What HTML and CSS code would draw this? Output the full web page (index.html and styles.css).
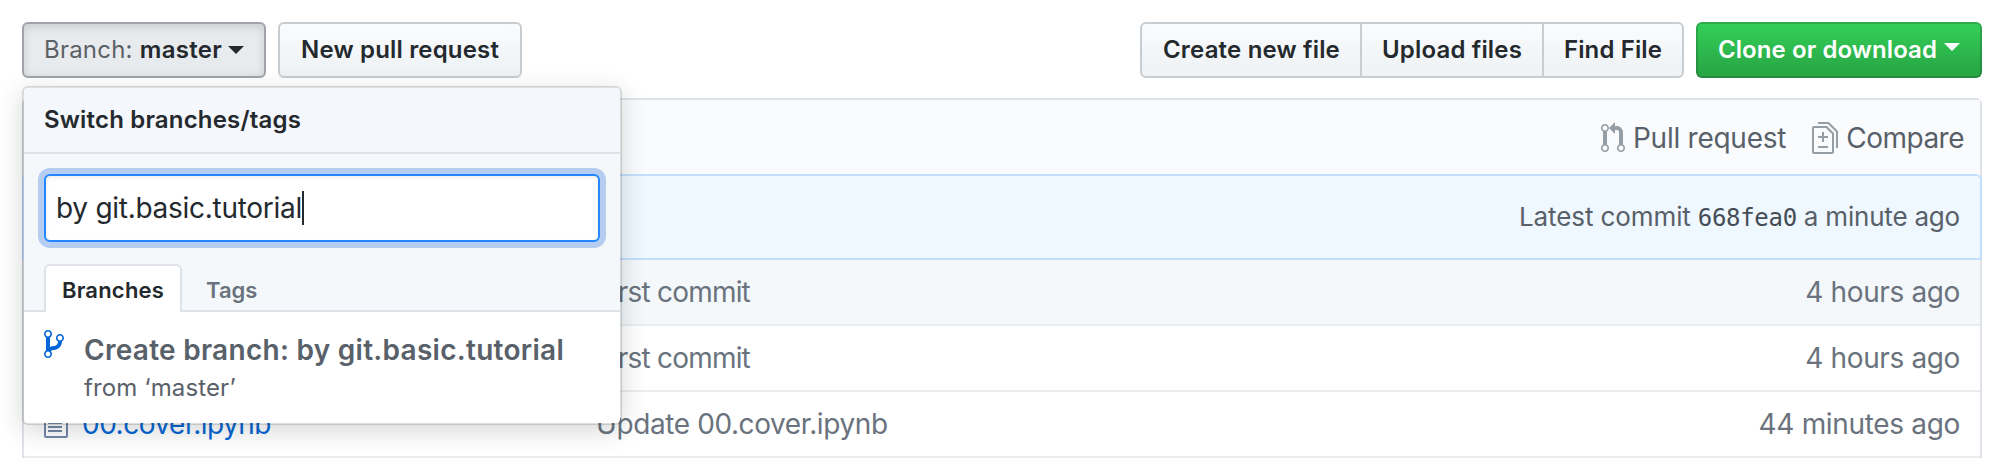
FILE: index.html
```html
<!DOCTYPE html>
<html lang="en">
<head>
<meta charset="utf-8">
<title>Repository files</title>
<link rel="stylesheet" href="styles.css">
</head>
<body>
<div class="toolbar">
  <div class="toolbar-left">
    <div class="branch-select">
      <button class="btn btn-selected"><span class="t-branch">Branch:</span><span class="t-master">master</span><span class="caret caret-branch"></span></button>
      <div class="menu">
        <div class="menu-header"><span class="t-switch">Switch branches/tags</span></div>
        <div class="menu-filters">
          <div class="filter-input"><span class="t-input">by git.basic.tutorial</span><span class="text-cursor"></span></div>
          <div class="tabs">
            <div class="tab tab-active"><span class="t-branches">Branches</span></div>
            <div class="tab tab-tags"><span class="t-tags">Tags</span></div>
          </div>
        </div>
        <div class="menu-item">
          <svg class="icon-branch" width="20" height="32" viewBox="0 0 10 16"><path fill-rule="evenodd" d="M10 5c0-1.11-.89-2-2-2a1.993 1.993 0 0 0-1 3.72v.3c-.02.52-.23.98-.63 1.38-.4.4-.86.61-1.38.63-.83.02-1.48.16-2 .45V4.72a1.993 1.993 0 0 0-1-3.72C.88 1 0 1.89 0 3a2 2 0 0 0 1 1.72v6.56c-.59.35-1 .99-1 1.72 0 1.11.89 2 2 2 1.11 0 2-.89 2-2 0-.53-.2-1-.53-1.36.09-.06.48-.41.59-.47.25-.11.56-.17.94-.17 1.05-.05 1.95-.45 2.75-1.25S8.95 7.77 9 6.73h-.02C9.59 6.37 10 5.73 10 5zM2 1.8c.66 0 1.2.55 1.2 1.2 0 .65-.55 1.2-1.2 1.2C1.35 4.2.8 3.65.8 3c0-.65.55-1.2 1.2-1.2zm0 12.41c-.66 0-1.2-.55-1.2-1.2 0-.65.55-1.2 1.2-1.2.65 0 1.2.55 1.2 1.2 0 .65-.55 1.2-1.2 1.2zm6-8c-.66 0-1.2-.55-1.2-1.2 0-.65.55-1.2 1.2-1.2.65 0 1.2.55 1.2 1.2 0 .65-.55 1.2-1.2 1.2z"/></svg>
          <div class="menu-item-text">
            <div class="menu-item-title"><span class="t-create">Create branch: by git.basic.tutorial</span></div>
            <div class="menu-item-sub"><span class="t-from">from ‘master’</span></div>
          </div>
        </div>
      </div>
    </div>
    <button class="btn"><span class="t-newpr">New pull request</span></button>
  </div>
  <div class="toolbar-right">
    <div class="btn-group">
      <button class="btn"><span class="t-newfile">Create new file</span></button>
      <button class="btn"><span class="t-upload">Upload files</span></button>
      <button class="btn"><span class="t-find">Find File</span></button>
    </div>
    <button class="btn btn-primary"><span class="t-clone">Clone or download</span><span class="caret caret-clone"></span></button>
  </div>
</div>
<div class="files">
  <div class="compare-bar">
    <a class="compare-link"><svg width="24" height="32" viewBox="0 0 12 16"><path fill-rule="evenodd" d="M11 11.28V5c-.03-.78-.34-1.47-.94-2.06C9.46 2.35 8.78 2.03 8 2H7V0L4 3l3 3V4h1c.27.02.48.11.69.31.21.2.3.42.31.69v6.28A1.993 1.993 0 0 0 10 15a1.993 1.993 0 0 0 1-3.72zm-1 2.92c-.66 0-1.2-.55-1.2-1.2 0-.65.55-1.2 1.2-1.2.65 0 1.2.55 1.2 1.2 0 .65-.55 1.2-1.2 1.2zM4 3c0-1.11-.89-2-2-2a1.993 1.993 0 0 0-1 3.72v6.56A1.993 1.993 0 0 0 2 15a1.993 1.993 0 0 0 1-3.72V4.72c.59-.34 1-.98 1-1.72zm-.8 10c0 .66-.55 1.2-1.2 1.2-.65 0-1.2-.55-1.2-1.2 0-.65.55-1.2 1.2-1.2.65 0 1.2.55 1.2 1.2zM2 4.2C1.34 4.2.8 3.65.8 3c0-.65.55-1.2 1.2-1.2.65 0 1.2.55 1.2 1.2 0 .65-.55 1.2-1.2 1.2z"/></svg><span class="t-pull">Pull request</span></a>
    <a class="compare-link"><svg width="26" height="32" viewBox="0 0 13 16"><path fill-rule="evenodd" d="M6 7h2v1H6v2H5V8H3V7h2V5h1v2zm-3 6h5v-1H3v1zM7.5 2L11 5.5V15c0 .55-.45 1-1 1H1c-.55 0-1-.45-1-1V3c0-.55.45-1 1-1h6.5zM10 6L7 3H1v12h9V6zM8.5 0H3v1h5l4 4v8h1V4.5L8.5 0z"/></svg><span class="t-compare">Compare</span></a>
  </div>
  <div class="commit-bar"><span class="t-latest">Latest commit</span><span class="sha">668fea0</span><span class="t-minute">a minute ago</span></div>
  <div class="row row-hover"><span class="name"></span><span class="message"><span class="t-first">First commit</span></span><span class="t-hours">4 hours ago</span></div>
  <div class="row"><span class="name"></span><span class="message"><span class="t-first">First commit</span></span><span class="t-hours">4 hours ago</span></div>
  <div class="row"><span class="name"><svg width="24" height="32" viewBox="0 0 12 16"><path fill-rule="evenodd" d="M6 5H2V4h4v1zM2 8h7V7H2v1zm0 2h7V9H2v1zm0 2h7v-1H2v1zm10-7.5V14c0 .55-.45 1-1 1H1c-.55 0-1-.45-1-1V2c0-.55.45-1 1-1h7.5L12 4.5zM11 5L8 2H1v12h10V5z"/></svg><a class="t-file">00.cover.ipynb</a></span><span class="message"><span class="t-update">Update 00.cover.ipynb</span></span><span class="t-minutes">44 minutes ago</span></div>
</div>
</body>
</html>
```
FILE: styles.css
```css
* { box-sizing: border-box; }
body { margin: 0; height: 458px; overflow: hidden; background: #fff; color: #24292e; font-family: Inter, "Noto Sans", sans-serif; font-size: 28px; white-space: nowrap; }
svg { display: block; flex: none; fill: currentColor; }
.toolbar { display: flex; justify-content: space-between; padding: 22px 20px 20px 22px; }
.toolbar-left, .toolbar-right { display: flex; gap: 12px; }
.btn { display: flex; align-items: center; height: 56px; padding: 0 20px; border: 2px solid #c8cdd1; border-radius: 6px; background: linear-gradient(#fafbfd, #eff3f6 90%); color: #24292e; font: 600 24px/36px Inter, "Noto Sans", sans-serif; white-space: nowrap; }
.btn-selected { background: #e8ebee; border-color: #a0a3aa; box-shadow: inset 0 3px 8px rgba(27,31,35,.15); }
.btn-group { display: flex; }
.btn-group .btn + .btn { border-left: 0; }
.btn-group .btn:not(:first-child) { border-top-left-radius: 0; border-bottom-left-radius: 0; }
.btn-group .btn:not(:last-child) { border-top-right-radius: 0; border-bottom-right-radius: 0; }
.btn-primary { border-color: rgba(27,31,35,.2); background: linear-gradient(#34d058, #28a745 90%) border-box; color: #fff; }
.caret { border: 8px solid transparent; border-bottom: 0; border-top-color: currentColor; }
.caret-branch { margin-left: 6px; }
.caret-clone { margin: 0 0 6px 7px; }
.branch-select { position: relative; }
.menu { position: absolute; z-index: 10; top: 64px; left: 0; width: 600px; height: 339px; border: 2px solid rgba(27,31,35,.15); border-radius: 6px; background: #fff; background-clip: padding-box; box-shadow: 0 6px 24px rgba(27,31,35,.18); }
.menu-header { height: 66px; border-bottom: 2px solid #dfe2e8; border-radius: 4px 4px 0 0; background: #f4f7fb; padding: 0 20px; font: 600 24px/63px Inter, sans-serif; }
.menu-filters { height: 158px; padding: 20px 20px 0; background: #f4f8fb; border-bottom: 2px solid #dfe2e8; }
.filter-input { display: flex; align-items: center; height: 68px; padding: 0 10px; background: #fff; border: 2px solid #2188ff; border-radius: 6px; box-shadow: inset 0 2px 4px rgba(27,31,35,.075), 0 0 0 6px #b4cdf1; }
.text-cursor { width: 2px; height: 34px; background: #24292e; }
.tabs { display: flex; margin-top: 22px; height: 48px; font: 600 22px/48px Inter, sans-serif; }
.tab-active { width: 138px; text-align: center; background: #fff; border: 2px solid #dfe2e8; border-bottom: 0; border-radius: 6px 6px 0 0; }
.tab-tags { padding: 2px 0 0 24px; color: #6a737d; }
.menu-item { display: flex; padding: 16px 20px; gap: 20px; color: #586069; }
.icon-branch { color: #0366d6; }
.menu-item-title { font-weight: 600; line-height: 44px; }
.menu-item-sub { font-size: 24px; line-height: 31px; }
.files { margin: 0 20px 0 22px; border: 2px solid #dfe2e8; border-bottom: 0; border-radius: 6px 6px 0 0; }
.compare-bar { display: flex; justify-content: flex-end; align-items: center; gap: 26px; height: 74px; padding: 2px 16px 0; background: #fafbfd; color: #586069; }
.compare-link { display: flex; align-items: center; gap: 8px; }
.compare-link svg { color: #959da5; }
.commit-bar { display: flex; justify-content: flex-end; align-items: baseline; height: 86px; margin: 0 -2px; padding: 0 20px; border: 2px solid #c4dffe; border-radius: 6px 6px 0 0; background: #eff7ff; color: #586069; font-size: 26px; line-height: 82px; }
.sha { margin: 0 7px; font: 24px/82px "DejaVu Sans Mono", monospace; color: #444d56; letter-spacing: -.3px; }
.row { display: flex; align-items: center; height: 66px; padding: 0 20px; border-bottom: 2px solid #e9edef; color: #6a737d; }
.row-hover { background: #f4f8fb; }
.name { display: flex; align-items: center; gap: 14px; width: 552px; color: #0366d6; }
.name svg { color: #7486a8; }
.message { flex: 1; }

/* Per-label tracking */
.t-branch { margin-right: 7px; font-weight: 400; color: #5c6166; letter-spacing: .22px; }
.t-master { letter-spacing: .3px; }
.t-newpr { margin: 0 1px; letter-spacing: .17px; }
.t-newfile { margin-left: 1px; letter-spacing: .18px; }
.t-upload { letter-spacing: .168px; }
.t-find { letter-spacing: .115px; }
.t-clone { letter-spacing: .08px; }
.t-switch { letter-spacing: .177px; }
.t-input { letter-spacing: -.277px; }
.t-branches { letter-spacing: .2px; }
.t-create { letter-spacing: .28px; }
.t-from { letter-spacing: .124px; }
.t-pull { letter-spacing: -.25px; }
.t-compare { letter-spacing: -.5px; }
.t-latest { letter-spacing: -.1px; }
.t-minute { letter-spacing: -.2px; }
.t-first { letter-spacing: -.788px; }
.t-hours { letter-spacing: -.37px; }
.t-file { letter-spacing: -.508px; }
.t-update { letter-spacing: -.4px; }
.t-minutes { letter-spacing: -.33px; }
```
